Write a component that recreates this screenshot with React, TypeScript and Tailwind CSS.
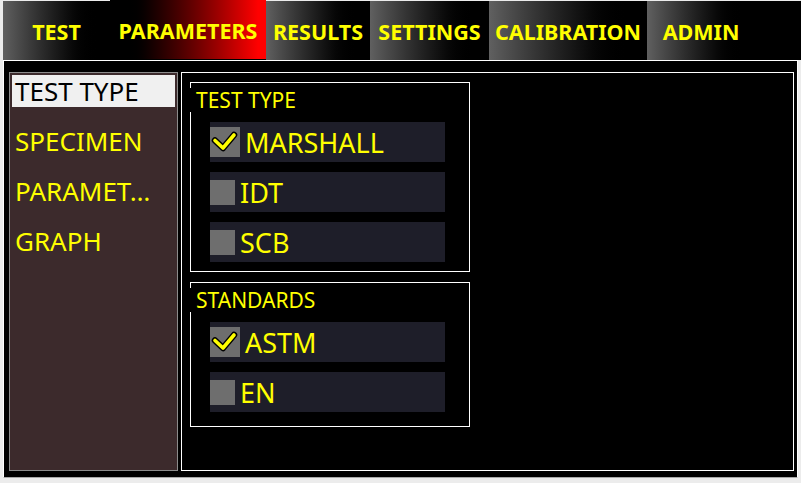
import React from 'react';

interface Tab {
    label: string;
    width: string;
    active?: boolean;
}

interface Option {
    label: string;
    checked: boolean;
}

const tabs: Tab[] = [
    { label: 'TEST', width: 'w-[107px]' },
    { label: 'PARAMETERS', width: 'w-[156px]', active: true },
    { label: 'RESULTS', width: 'w-[104px]' },
    { label: 'SETTINGS', width: 'w-[119px]' },
    { label: 'CALIBRATION', width: 'w-[158px]' },
    { label: 'ADMIN', width: 'w-[108px]' },
];

const navItems = ['TEST TYPE', 'SPECIMEN', 'PARAMET…', 'GRAPH'];

const testTypes: Option[] = [
    { label: 'MARSHALL', checked: true },
    { label: 'IDT', checked: false },
    { label: 'SCB', checked: false },
];

const standards: Option[] = [
    { label: 'ASTM', checked: true },
    { label: 'EN', checked: false },
];

const font = { fontFamily: '"Noto Sans", "Open Sans", sans-serif' };

const CheckRow: React.FC<{ option: Option }> = ({ option }) => (
    <div className="flex items-center h-10 w-[235px] bg-[#1e1e29] gap-[5px]">
        {option.checked ? (
            <div className="w-[30px] h-[30px] bg-[#6e6e6e] shrink-0">
                <svg width="30" height="30" viewBox="0 0 30 30">
                    <path d="M5 13.5 L13 21 L24 8" fill="none" stroke="#000" strokeWidth="6.5" strokeLinecap="round" strokeLinejoin="round" />
                    <path d="M5 13.5 L13 21 L24 8" fill="none" stroke="#ffff00" strokeWidth="3.6" strokeLinecap="round" strokeLinejoin="round" />
                </svg>
            </div>
        ) : (
            <div className="w-[25px] h-[25px] bg-[#6e6e6e] shrink-0" />
        )}
        <span className="text-[27px] leading-none text-[#ffff00]">{option.label}</span>
    </div>
);

const GroupBox: React.FC<{ title: string; options: Option[]; height: string }> = ({ title, options, height }) => (
    <div className={`w-[280px] ${height} border border-white flex flex-col`}>
        <div className="mt-[5px] -ml-px h-6 w-[118px] bg-black pl-[6px] text-[21px] leading-6 text-[#ffff00]">
            {title}
        </div>
        <div className="mt-[10px] ml-[19px] flex flex-col gap-[10px]">
            {options.map((o) => (
                <CheckRow key={o.label} option={o} />
            ))}
        </div>
    </div>
);

export default function App() {
    return (
        <div className="w-[801px] h-[483px] bg-[#ececec] pl-[3px] flex flex-col overflow-hidden" style={font}>
            {/* tab bar */}
            <div className="h-[59px] mt-px bg-black flex">
                {tabs.map((t) => (
                    <div
                        key={t.label}
                        className={`${t.width} h-full pt-[3px] flex items-center justify-center text-[21.5px] font-bold text-[#ffff00] ${
                            t.active
                                ? 'bg-linear-to-r from-black from-10% to-[#ff0000] to-95% -mt-px h-[60px]'
                                : 'bg-linear-to-r from-[#606060] to-black to-90%'
                        }`}
                    >
                        {t.label}
                    </div>
                ))}
            </div>

            {/* main panel */}
            <div className="w-[795px] h-[418px] border border-white border-b-[#a8a8a8] bg-black flex pl-[5px] pt-[11px] gap-[3px]">
                <div className="w-[169px] h-[399px] border border-[#8c8c8c] bg-[#3c2a2c] p-[2px] flex flex-col gap-[18px]">
                    {navItems.map((item, i) => (
                        <div
                            key={item}
                            className={`h-8 pl-[3px] flex items-center text-[26px] leading-none whitespace-nowrap ${
                                i === 0 ? 'bg-[#f0f0f0] text-black' : 'text-[#ffff00]'
                            }`}
                        >
                            {item}
                        </div>
                    ))}
                </div>

                <div className="w-[613px] h-[399px] border border-white pl-2 pt-[9px] flex flex-col gap-[10px]">
                    <GroupBox title="TEST TYPE" options={testTypes} height="h-[190px]" />
                    <GroupBox title="STANDARDS" options={standards} height="h-[145px]" />
                </div>
            </div>
        </div>
    );
}
